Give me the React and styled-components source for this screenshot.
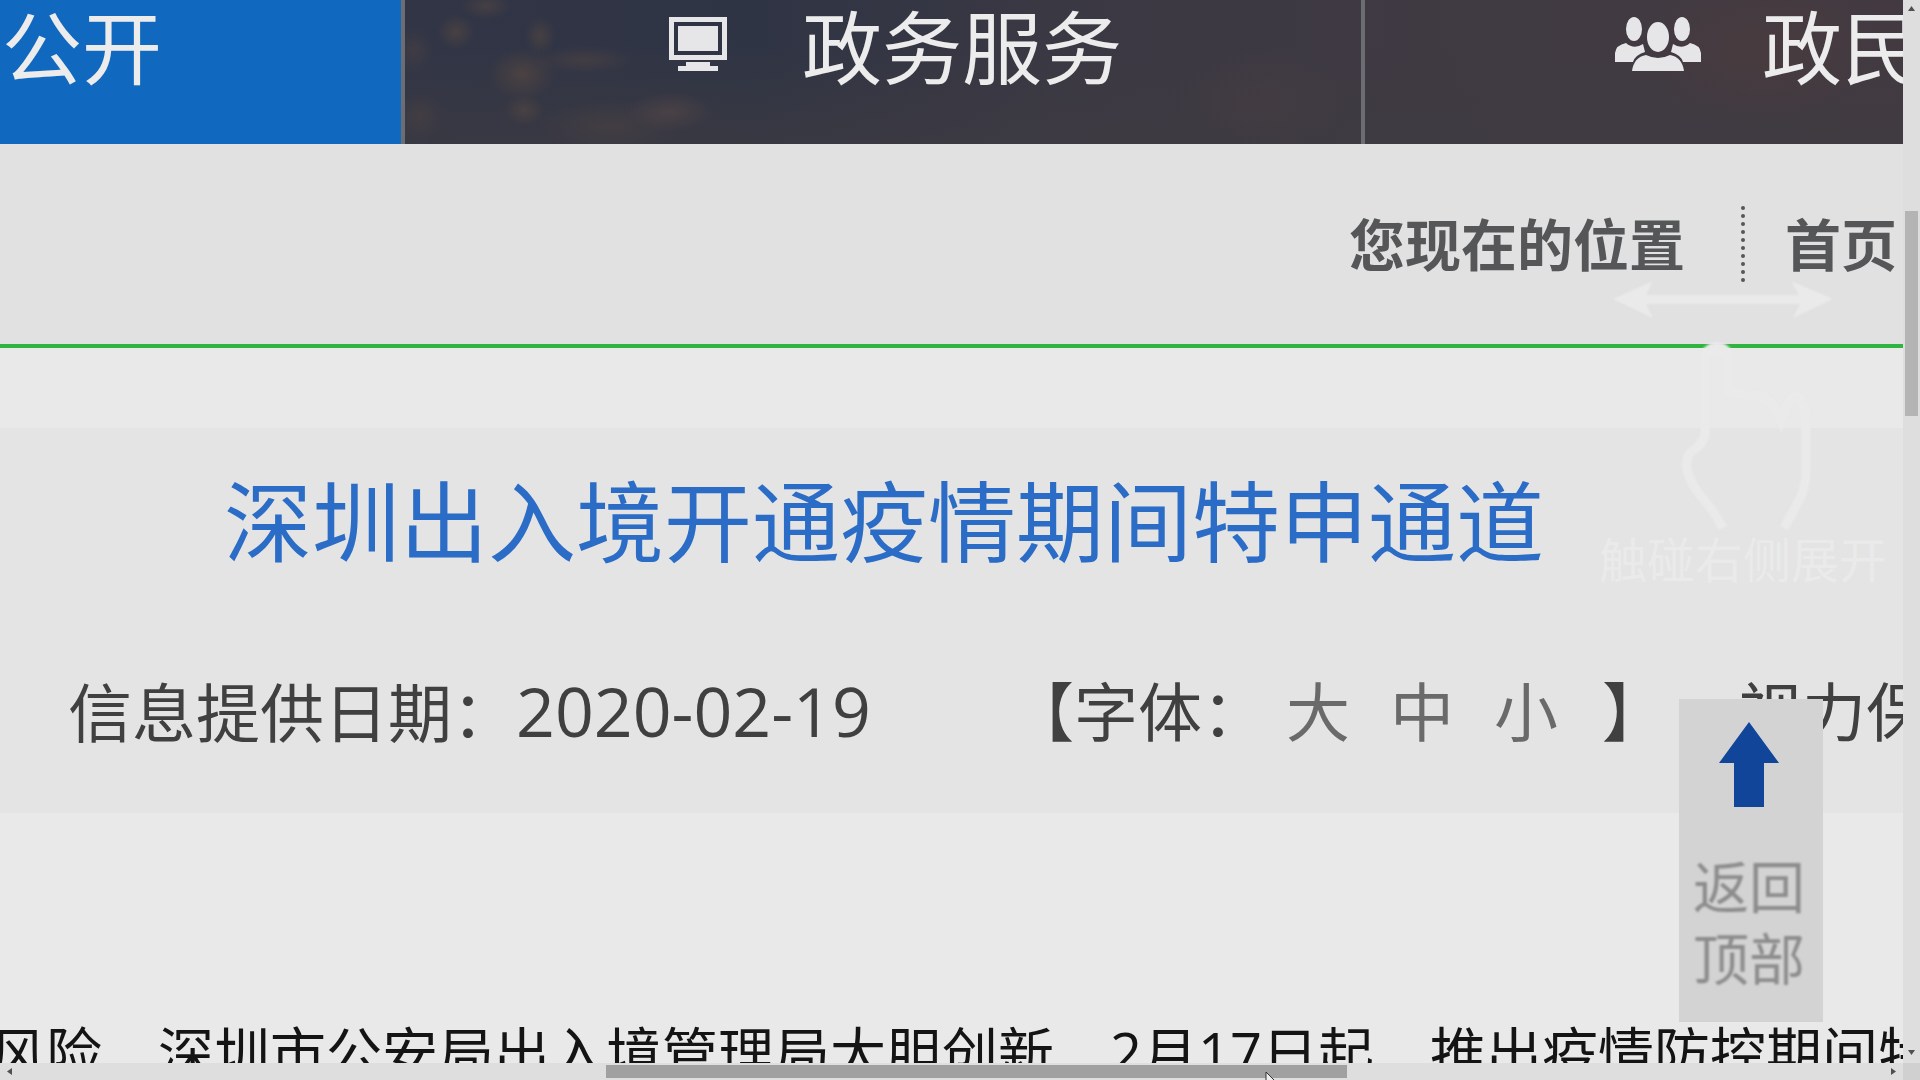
import React from "react";
import styled, { createGlobalStyle } from "styled-components";

const GlobalStyle = createGlobalStyle`
  * {
    box-sizing: border-box;
  }

  body {
    margin: 0;
    background: #e9e9e9;
    font-family: "Open Sans", "Noto Sans CJK SC", sans-serif;
    overflow: hidden;
  }

  button {
    margin: 0;
    padding: 0;
    border: 0;
    background: none;
    font: inherit;
    color: inherit;
    cursor: pointer;
  }

  a {
    color: inherit;
    text-decoration: none;
  }
`;

const Frame = styled.div`
  position: relative;
  display: grid;
  grid-template-columns: minmax(0, 1fr) 17px;
  grid-template-rows: minmax(0, 1fr) 17px;
  width: 100%;
  height: 100vh;
`;

const Page = styled.div`
  position: relative;
  overflow: hidden;
  white-space: nowrap;
`;

const Nav = styled.nav`
  display: flex;
  height: 144px;
  overflow: hidden;
  background:
    radial-gradient(ellipse 34px 26px at 522px 74px, rgba(92, 74, 64, 0.6), transparent),
    radial-gradient(ellipse 16px 20px at 540px 36px, rgba(92, 74, 64, 0.5), transparent),
    radial-gradient(ellipse 20px 16px at 524px 110px, rgba(92, 74, 64, 0.5), transparent),
    radial-gradient(ellipse 50px 14px at 584px 60px, rgba(84, 70, 66, 0.5), transparent),
    radial-gradient(ellipse 20px 18px at 456px 32px, rgba(92, 74, 64, 0.55), transparent),
    radial-gradient(ellipse 26px 14px at 486px 6px, rgba(84, 70, 66, 0.6), transparent),
    radial-gradient(ellipse 20px 24px at 414px 50px, rgba(84, 70, 66, 0.4), transparent),
    radial-gradient(ellipse 24px 24px at 420px 116px, rgba(84, 70, 66, 0.4), transparent),
    radial-gradient(ellipse 44px 20px at 670px 112px, rgba(88, 72, 72, 0.6), transparent),
    radial-gradient(ellipse 70px 26px at 610px 126px, rgba(84, 70, 66, 0.4), transparent),
    radial-gradient(ellipse 90px 50px at 1260px 100px, rgba(76, 62, 66, 0.35), transparent),
    radial-gradient(ellipse 120px 70px at 1760px 50px, rgba(80, 60, 58, 0.45), transparent),
    linear-gradient(to bottom, transparent 30%, rgba(62, 59, 65, 0.6)),
    linear-gradient(to right, #313546 400px, #2f3444 760px, #3a3843 1050px, #403a42 1500px, #433a41);
`;

const Tabs = styled.div`
  display: flex;
  margin-left: -555px;
`;

const Tab = styled.a`
  display: flex;
  flex: none;
  align-items: flex-start;
  width: 960px;
  padding-left: 250px;
  border-right: 4px solid #6c6d72;
  background: ${props => (props.$active ? "#1069be" : "transparent")};
  color: #ececec;
  font-size: 80px;
  line-height: 94px;
`;

const TabIcon = styled.span`
  display: flex;
  justify-content: center;
  width: 86px;
  margin-right: 61px;
  padding-top: 16px;
`;

const Crumbs = styled.div`
  display: flex;
  align-items: center;
  justify-content: flex-end;
  height: 204px;
  padding-right: 6px;
  border-bottom: 4px solid #2fb43f;
  background: #e1e1e1;
  color: #555657;
  font-size: 56px;
  font-weight: 700;
  line-height: 76px;
`;

const CrumbRule = styled.span`
  height: 76px;
  margin: 0 40px 0 56px;
  border-left: 4px dotted #555657;
`;

const Heading = styled.header`
  height: 385px;
  margin-top: 80px;
  padding-top: 39px;
  background: #e4e4e4;
`;

const Title = styled.h1`
  margin: 0;
  padding-left: 224px;
  color: #2a6cc6;
  font-size: 88px;
  font-weight: 400;
  line-height: 108px;
`;

const Meta = styled.div`
  display: flex;
  align-items: center;
  margin-top: 88px;
  padding-left: 68px;
  color: #404040;
  font-size: 64px;
  line-height: 96px;
`;

const Published = styled.span`
  flex: none;
  width: 942px;
`;

const PublishedDate = styled.time`
  font-size: 68px;
`;

const Sizes = styled.span`
  display: flex;
  gap: 40px;
  margin: 0 44px 0 20px;
  color: #6a6a6a;
`;

const EyeCare = styled.span`
  margin-left: 72px;
`;

const Article = styled.p`
  margin: 199px 0 0 -10px;
  color: #141414;
  font-size: 56px;
  line-height: 80px;
`;

const Hint = styled.div`
  position: absolute;
  top: 280px;
  right: 16px;
  display: flex;
  flex-direction: column;
  color: #eaeaea;
  font-size: 48px;
  line-height: 52px;
  pointer-events: none;

  svg {
    margin-left: 12px;
    filter: blur(1px);
  }
`;

const BackToTop = styled.button`
  && {
    position: absolute;
    right: 80px;
    bottom: 41px;
    display: flex;
    flex-direction: column;
    align-items: center;
    width: 144px;
    height: 323px;
    padding: 23px 4px 0 0;
    background: #d3d3d3;
    color: #8c8c8c;
    font-size: 56px;
    line-height: 72px;
    white-space: normal;
  }
`;

const BackLabel = styled.span`
  width: 112px;
  margin-top: 42px;
  filter: blur(1px);
`;

const VerticalBar = styled.div`
  display: flex;
  flex-direction: column;
  align-items: center;
  justify-content: space-between;
  padding: 6px 0 8px;
  background: #dedede;
`;

const VerticalThumb = styled.div`
  width: 13px;
  height: 205px;
  margin-bottom: 434px;
  background: #b4b4b4;
`;

const HorizontalBar = styled.div`
  display: flex;
  align-items: center;
  justify-content: space-between;
  padding: 0 6px;
  background: #dedede;
`;

const HorizontalThumb = styled.div`
  width: 741px;
  height: 13px;
  margin-left: 50px;
  background: #a0a0a0;
`;

const Corner = styled.div`
  background: #d0d0d0;
`;

const Pointer = styled.svg`
  position: absolute;
  left: 1265px;
  bottom: 0;
`;

const Arrow = ({ turn }) => (
  <svg width="7" height="5" viewBox="0 0 7 5" style={{ transform: `rotate(${turn}deg)` }}>
    <path d="M0 5 3.5 0 7 5z" fill="#505050" />
  </svg>
);

const Monitor = () => (
  <svg width="58" height="56" viewBox="0 0 58 56" fill="#e6e6e8">
    <path fillRule="evenodd" d="M0 1h58v43H0zM5 6v33h48V6z" />
    <path d="M9 10h40v25H9zM17 46h24v4h8v5H9v-5h8z" />
  </svg>
);

const People = () => (
  <svg width="86" height="56" viewBox="0 0 86 56" fill="#e6e6e8">
    <ellipse cx="19" cy="13" rx="8" ry="12" />
    <ellipse cx="67" cy="13" rx="8" ry="12" />
    <path d="M0 46V37q1-8 11-10 8 7 17 1l2 8q-10 3-12 10zM86 46V37q-1-8-11-10-8 7-17 1l-2 8q10 3 12 10z" />
    <ellipse cx="43" cy="21" rx="11" ry="15" />
    <path d="M17 55q2-14 14-16 12 6 24 0 12 2 14 16z" />
  </svg>
);

const Swipe = () => (
  <svg width="226" height="254" viewBox="0 0 226 254" fill="none" stroke="#eaeaea" strokeWidth="9">
    <path d="M2 19 42 1 35 15H188L180 1 222 19 182 38 189 24H35L42 38z" fill="#eaeaea" stroke="none" />
    <path d="M94 76V68Q98 62 106 62 114 62 118 68V76z" fill="#eaeaea" stroke="none" />
    <path d="M112 248Q104 232 88 214 68 186 80 172 96 162 94 148V76Q95 68 106 68 117 68 117 76V112L138 116Q160 112 170 140 180 112 188 118 195 126 195 140V190Q195 210 186 224L173 248" />
  </svg>
);

const tabs = [
  { name: "政务公开", active: true },
  { name: "政务服务", icon: <Monitor /> },
  { name: "政民互动", icon: <People /> }
];

export default () => (
  <Frame>
    <GlobalStyle />
    <Page>
      <Nav>
        <Tabs>
          {tabs.map(tab => (
            <Tab key={tab.name} href="#" $active={tab.active}>
              <TabIcon>{tab.icon}</TabIcon>
              {tab.name}
            </Tab>
          ))}
        </Tabs>
      </Nav>
      <Crumbs>
        <span>您现在的位置</span>
        <CrumbRule />
        <a href="#">首页</a>
      </Crumbs>
      <Heading>
        <Title>深圳出入境开通疫情期间特申通道</Title>
        <Meta>
          <Published>
            信息提供日期：<PublishedDate>2020-02-19</PublishedDate>
          </Published>
          <span>【字体：</span>
          <Sizes>
            <button>大</button>
            <button>中</button>
            <button>小</button>
          </Sizes>
          <span>】</span>
          <EyeCare>视力保护色</EyeCare>
        </Meta>
      </Heading>
      <Article>
        风险　深圳市公安局出入境管理局大胆创新　2月17日起　推出疫情防控期间特申通道
      </Article>
      <Hint>
        <Swipe />
        <span>触碰右侧展开</span>
      </Hint>
      <BackToTop>
        <svg width="60" height="86" viewBox="0 0 60 86">
          <path d="M30 0 60 41H45V85H15V41H0z" fill="#10459a" />
        </svg>
        <BackLabel>返回顶部</BackLabel>
      </BackToTop>
    </Page>
    <VerticalBar>
      <Arrow turn={0} />
      <VerticalThumb />
      <Arrow turn={180} />
    </VerticalBar>
    <HorizontalBar>
      <Arrow turn={-90} />
      <HorizontalThumb />
      <Arrow turn={90} />
    </HorizontalBar>
    <Corner />
    <Pointer width="12" height="8" viewBox="0 0 12 8">
      <path d="M1 0V12L9 8z" fill="#eee" stroke="#333" />
    </Pointer>
  </Frame>
);
